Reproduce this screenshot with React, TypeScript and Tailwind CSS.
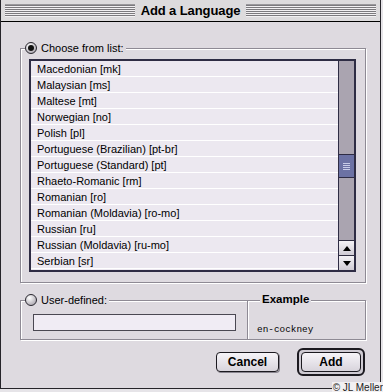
import React from 'react';

const languages = [
  'Macedonian [mk]',
  'Malaysian [ms]',
  'Maltese [mt]',
  'Norwegian [no]',
  'Polish [pl]',
  'Portuguese (Brazilian) [pt-br]',
  'Portuguese (Standard) [pt]',
  'Rhaeto-Romanic [rm]',
  'Romanian [ro]',
  'Romanian (Moldavia) [ro-mo]',
  'Russian [ru]',
  'Russian (Moldavia) [ru-mo]',
  'Serbian [sr]',
];

const Stripes = () => (
  <div className="flex-1 h-[13px] bg-[repeating-linear-gradient(to_bottom,#7c7a7e_0px,#7c7a7e_1px,#f2f0f2_1px,#f2f0f2_2px)] border-t border-[#9a989c]" />
);

function Radio({ checked }: { checked?: boolean }) {
  return (
    <span className="w-[12px] h-[12px] rounded-full border border-[#2a2830] bg-[radial-gradient(circle_at_35%_30%,#ffffff,#b8b4bc_70%,#8a8690)] flex items-center justify-center shrink-0">
      {checked && <span className="w-[6px] h-[6px] rounded-full bg-[#111]" />}
    </span>
  );
}

function Arrow({ up }: { up?: boolean }) {
  return (
    <div className="h-[15px] border-t border-[#2e2c40] bg-[linear-gradient(#f4f2f6,#cfcbd4)] flex items-center justify-center">
      <svg width="8" height="5" viewBox="0 0 8 5">
        <polygon points={up ? '4,0 8,5 0,5' : '0,0 8,0 4,5'} fill="#000" />
      </svg>
    </div>
  );
}

export default function App() {
  return (
    <div className="w-[383px] h-[392px] bg-[#e6e4e8] relative font-['Liberation_Sans',Arial,sans-serif] text-black overflow-hidden">
      <div className="w-[381px] h-[389px] bg-[#dedae0] border-l border-r border-b border-[#26242a] flex flex-col">
        <div className="h-[22px] shrink-0 border-b border-black bg-[#dddbdd] px-[4px] flex items-center gap-[6px]">
          <Stripes />
          <span className="text-[13px] font-bold leading-none tracking-[-0.1px]">Add a Language</span>
          <Stripes />
        </div>

        <div className="pl-[19px] pr-[14px] flex flex-col">
          <div className="relative mt-[26px] h-[235px] border border-[#8e8a94] shadow-[inset_1px_1px_0_#ffffff,1px_1px_0_#ffffff] pt-[10px] pl-[8px]">
            <div className="absolute left-[4px] top-[-7px] flex items-center gap-[4px] bg-[#dedae0] pr-[2px] text-[11px] leading-none">
              <Radio checked />
              <span>Choose from list:</span>
            </div>
            <div className="w-[327px] h-[213px] border-2 border-[#2e2c44] bg-[#ece8f0] flex">
              <div className="flex-1 flex flex-col">
                {languages.map(l => (
                  <div key={l} className="h-[16px] border-b border-white pl-[6px] pt-[2px] text-[11px] leading-[13px] whitespace-nowrap">
                    {l}
                  </div>
                ))}
              </div>
              <div className="w-[16px] border-l border-[#2e2c44] bg-[#aaa4b0] flex flex-col">
                <div className="h-[93px]" />
                <div className="h-[24px] border-t border-b border-[#2e2c44] bg-[#6c72a4] flex flex-col items-center justify-center gap-[1px]">
                  <span className="w-[7px] h-[1px] bg-[#c8cce8]" />
                  <span className="w-[7px] h-[1px] bg-[#c8cce8]" />
                  <span className="w-[7px] h-[1px] bg-[#c8cce8]" />
                  <span className="w-[7px] h-[1px] bg-[#c8cce8]" />
                </div>
                <div className="flex-1" />
                <Arrow up />
                <Arrow />
              </div>
            </div>
          </div>

          <div className="mt-[17px] h-[40px] flex">
            <div className="relative w-[228px] border border-[#8e8a94] shadow-[inset_1px_1px_0_#ffffff,1px_1px_0_#ffffff] pt-[13px] pl-[12px]">
              <div className="absolute left-[4px] top-[-7px] flex items-center gap-[4px] bg-[#dedae0] pr-[2px] text-[11px] leading-none">
                <Radio />
                <span>User-defined:</span>
              </div>
              <div className="w-[203px] h-[17px] border border-[#4a4852] bg-[#f0ecf4]" />
            </div>
            <div className="relative flex-1 border border-l-0 border-[#8e8a94] shadow-[inset_0_1px_0_#ffffff,1px_1px_0_#ffffff] pl-[9px] pt-[14px]">
              <span className="absolute left-[12px] top-[-7px] bg-[#dedae0] px-[2px] text-[11.5px] font-bold leading-none">Example</span>
              <span className="font-['Liberation_Mono',monospace] text-[9.4px] leading-none">en-cockney</span>
            </div>
          </div>

          <div className="mt-[8px] flex justify-end items-center gap-[18px] pr-[1px]">
            <button className="w-[63px] h-[20px] rounded-[4px] border border-[#1c1a20] bg-[linear-gradient(#f6f4f8,#d8d4dc)] shadow-[1px_1px_0_#8a8690] text-[12px] font-bold leading-none">
              Cancel
            </button>
            <div className="w-[68px] h-[28px] rounded-[6px] border-2 border-[#1c1a20] bg-[#cfcbd3] p-[2px] flex">
              <button className="flex-1 rounded-[4px] border border-[#1c1a20] bg-[linear-gradient(#f6f4f8,#d8d4dc)] text-[12px] font-bold leading-none">
                Add
              </button>
            </div>
          </div>
        </div>
      </div>
      <span className="absolute right-0 bottom-[-1px] bg-[#f2f0f2] pl-[1px] text-[10px] leading-[11px] text-[#222]">© JL Meller</span>
    </div>
  );
}
